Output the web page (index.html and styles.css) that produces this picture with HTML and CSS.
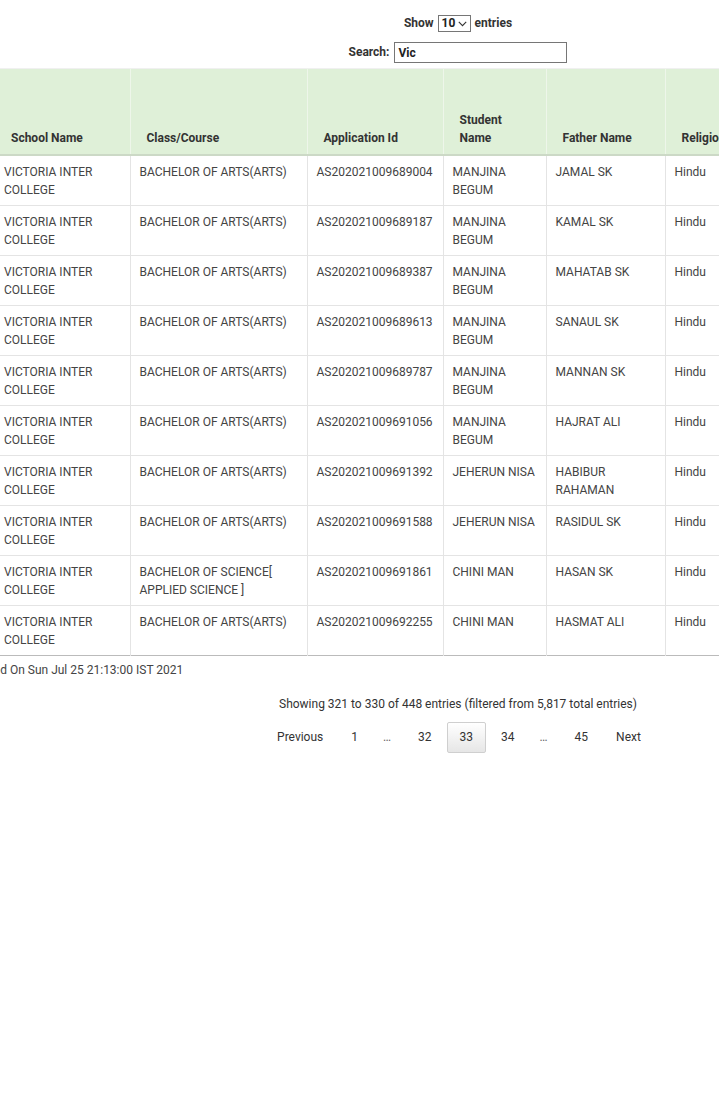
FILE: index.html
```html
<!DOCTYPE html>
<html>
<head>
<meta charset="utf-8">
<title>Students</title>
<link rel="stylesheet" href="styles.css">
</head>
<body>
<div class="wrapper">
  <div class="length">
    <label>Show <span class="len-select"><span class="len-val">10</span><svg class="chev" width="9" height="6" viewBox="0 0 9 6"><path d="M0.8 0.8 L4.5 4.6 L8.2 0.8" fill="none" stroke="#333" stroke-width="1.1"/></svg></span> entries</label>
  </div>
  <div class="filter">
    <label>Search: <span class="search">Vic</span></label>
  </div>
  <table class="data">
    <colgroup>
      <col class="c1"><col class="c2"><col class="c3"><col class="c4"><col class="c5"><col class="c6">
    </colgroup>
    <thead>
      <tr>
        <th>School Name</th>
        <th>Class/Course</th>
        <th>Application Id</th>
        <th>Student Name</th>
        <th>Father Name</th>
        <th>Religion</th>
      </tr>
    </thead>
    <tbody>
      <tr><td>VICTORIA INTER COLLEGE</td><td>BACHELOR OF ARTS(ARTS)</td><td>AS202021009689004</td><td>MANJINA BEGUM</td><td>JAMAL SK</td><td>Hindu</td></tr>
      <tr><td>VICTORIA INTER COLLEGE</td><td>BACHELOR OF ARTS(ARTS)</td><td>AS202021009689187</td><td>MANJINA BEGUM</td><td>KAMAL SK</td><td>Hindu</td></tr>
      <tr><td>VICTORIA INTER COLLEGE</td><td>BACHELOR OF ARTS(ARTS)</td><td>AS202021009689387</td><td>MANJINA BEGUM</td><td>MAHATAB SK</td><td>Hindu</td></tr>
      <tr><td>VICTORIA INTER COLLEGE</td><td>BACHELOR OF ARTS(ARTS)</td><td>AS202021009689613</td><td>MANJINA BEGUM</td><td>SANAUL SK</td><td>Hindu</td></tr>
      <tr><td>VICTORIA INTER COLLEGE</td><td>BACHELOR OF ARTS(ARTS)</td><td>AS202021009689787</td><td>MANJINA BEGUM</td><td>MANNAN SK</td><td>Hindu</td></tr>
      <tr><td>VICTORIA INTER COLLEGE</td><td>BACHELOR OF ARTS(ARTS)</td><td>AS202021009691056</td><td>MANJINA BEGUM</td><td>HAJRAT ALI</td><td>Hindu</td></tr>
      <tr><td>VICTORIA INTER COLLEGE</td><td>BACHELOR OF ARTS(ARTS)</td><td>AS202021009691392</td><td>JEHERUN NISA</td><td>HABIBUR RAHAMAN</td><td>Hindu</td></tr>
      <tr><td>VICTORIA INTER COLLEGE</td><td>BACHELOR OF ARTS(ARTS)</td><td>AS202021009691588</td><td>JEHERUN NISA</td><td>RASIDUL SK</td><td>Hindu</td></tr>
      <tr><td>VICTORIA INTER COLLEGE</td><td>BACHELOR OF SCIENCE[ APPLIED SCIENCE ]</td><td>AS202021009691861</td><td>CHINI MAN</td><td>HASAN SK</td><td>Hindu</td></tr>
      <tr><td>VICTORIA INTER COLLEGE</td><td>BACHELOR OF ARTS(ARTS)</td><td>AS202021009692255</td><td>CHINI MAN</td><td>HASMAT ALI</td><td>Hindu</td></tr>
    </tbody>
  </table>
  <div class="generated">Last Updated On Sun Jul 25 21:13:00 IST 2021</div>
  <div class="info">Showing 321 to 330 of 448 entries (filtered from 5,817 total entries)</div>
  <div class="paginate">
    <a class="pbtn">Previous</a><a class="pbtn">1</a><span class="ellipsis">…</span><a class="pbtn">32</a><a class="pbtn current">33</a><a class="pbtn">34</a><span class="ellipsis">…</span><a class="pbtn">45</a><a class="pbtn">Next</a>
  </div>
</div>
</body>
</html>
```
FILE: styles.css
```css
html, body {
  margin: 0;
  padding: 0;
  overflow: hidden;
  background: #fff;
}
body {
  font-family: Roboto, "Liberation Sans", sans-serif;
  font-size: 12px;
  line-height: 1.42857;
  color: #333;
}
.wrapper {
  width: 926px;
  margin-left: -5px;
}
.length {
  text-align: center;
  padding-top: 15px;
  height: 17px;
  font-weight: bold;
}
.len-select {
  display: inline-flex;
  align-items: center;
  box-sizing: border-box;
  width: 33px;
  height: 17px;
  padding: 0 0 0 3px;
  margin: 0 1px;
  border: 1px solid #767676;
  background: #fff;
  color: #222;
  vertical-align: middle;
  line-height: 15px;
}
.len-val {
  flex: 1;
  text-align: left;
}
.chev {
  margin-right: 3px;
}
.filter {
  text-align: center;
  margin-top: 10px;
  font-weight: bold;
}
.search {
  display: inline-block;
  box-sizing: border-box;
  text-align: left;
  width: 173px;
  height: 21px;
  line-height: 20px;
  padding: 0 3px;
  border: 1px solid #767676;
  margin-left: 2px;
  color: #222;
  vertical-align: middle;
}
.data {
  margin-top: 5px;
  border-collapse: collapse;
  table-layout: fixed;
  width: 926px;
  border-top: 1px solid #f0f0f0;
  border-bottom: 1px solid #bbb;
}
.c1 { width: 135px; }
.c2 { width: 177px; }
.c3 { width: 136px; }
.c4 { width: 103px; }
.c5 { width: 119px; }
.c6 { width: 256px; }
.data th {
  background: #dff0d8;
  text-align: left;
  vertical-align: bottom;
  font-weight: bold;
  color: #333;
  line-height: 17.5px;
  padding: 8px 30px 7px 16px;
  height: 70px;
  border-left: 1px solid #eef6ea;
  border-bottom: 2px solid #ccd9c6;
}
.data th:first-child { border-left: none; }
.data td {
  vertical-align: top;
  line-height: 17.5px;
  padding: 8px 8px 6px 9px;
  height: 35px;
  border-top: 1px solid #e4e4e4;
  border-left: 1px solid #e4e4e4;
  color: #444;
}
.data td:first-child { border-left: none; }
.generated {
  margin-left: -59px;
  margin-top: 6px;
  color: #444;
}
.info {
  text-align: center;
  margin-top: 17px;
  color: #333;
}
.paginate {
  text-align: center;
  margin-top: 9px;
}
.pbtn {
  display: inline-block;
  box-sizing: border-box;
  min-width: 1.5em;
  padding: 6px 12px;
  margin-left: 2px;
  border: 1px solid transparent;
  border-radius: 2px;
  text-align: center;
  color: #333;
  cursor: pointer;
}
.pbtn.current {
  border: 1px solid #cfcfcf;
  background: linear-gradient(to bottom, #fff 0%, #e6e6e6 100%);
}
.ellipsis {
  display: inline-block;
  padding: 0 1em;
  color: #666;
}
```
